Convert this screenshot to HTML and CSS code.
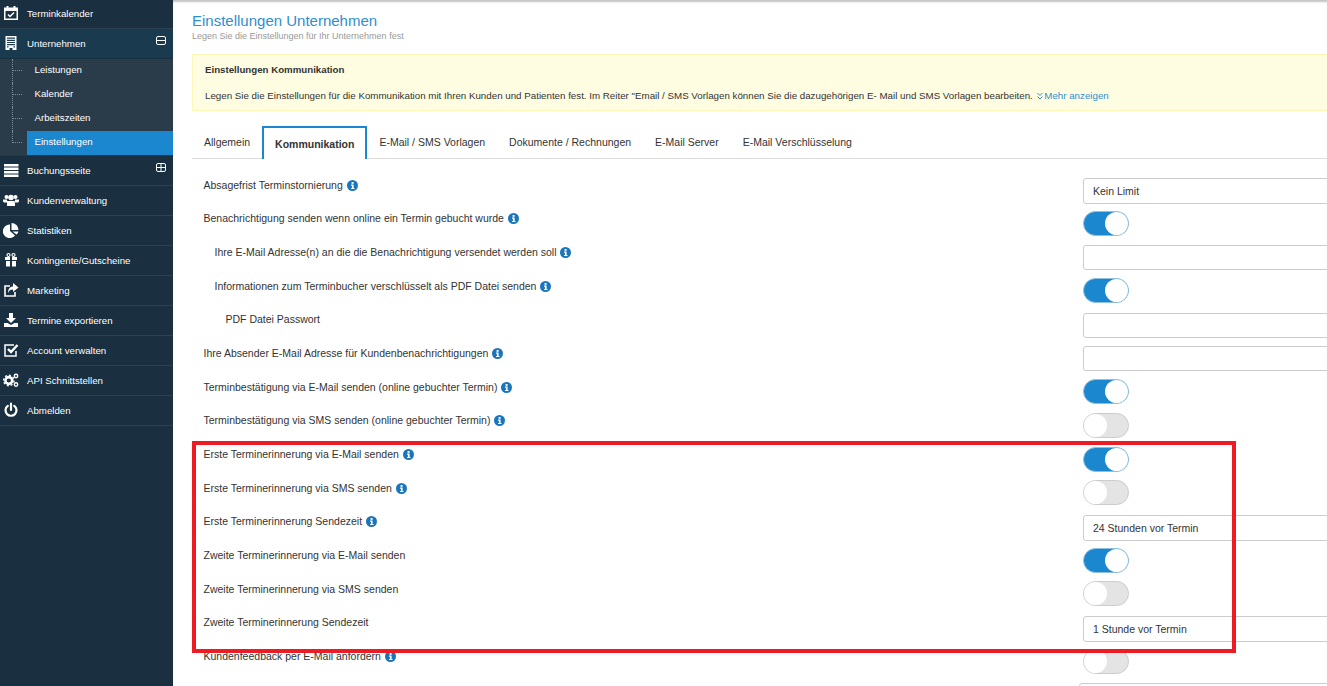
FILE: index.html
```html
<!DOCTYPE html>
<html lang="de">
<head>
<meta charset="utf-8">
<title>Einstellungen Unternehmen</title>
<link rel="stylesheet" href="styles.css">
</head>
<body>
<svg class="defs" width="0" height="0" aria-hidden="true">
  <symbol id="info" viewBox="0 0 12 12">
    <circle cx="6" cy="6" r="6" fill="#1b75bb"/>
    <rect x="5" y="2.2" width="2.2" height="2" fill="#fff"/>
    <path d="M4.4 5h2.8v3.600h1v1.200H4.400V8.600h1V6.200h-1z" fill="#fff"/>
  </symbol>
</svg>
<aside class="sidebar">
  <a class="nav-item">
    <svg class="nav-icon" viewBox="0 0 16 16"><path fill="#fff" d="M1 2.500h2.500V1h2v1.500h5V1h2v1.500H15V15H1zM2.500 6v7.500h11V6z"/><path d="M5 9.500l2 2 4-4" fill="none" stroke="#fff" stroke-width="1.500"/></svg>
    <span>Terminkalender</span>
  </a>
  <a class="nav-item nav-open">
    <svg class="nav-icon" viewBox="0 0 16 16"><path fill="#fff" fill-rule="evenodd" d="M2.500 1h11v14H9.500v-2h-3v2h-4zM4 2.500v1.200h8V2.500zM4 4.700v1.200h8V4.700zM4 6.900v1.200h8V6.900zM4 9.100v1.200h8V9.100zM4 11.300v1.200h1.500v-1.200zM10.500 11.300v1.200H12v-1.200z"/></svg>
    <span>Unternehmen</span>
    <svg class="nav-toggle" viewBox="0 0 10 10"><rect x=".5" y=".5" width="9" height="8" rx="1.500" fill="none" stroke="#fff"/><path d="M1 4.500h8" stroke="#fff"/></svg>
  </a>
  <ul class="subnav">
    <li class="sub-item"><span>Leistungen</span></li>
    <li class="sub-item"><span>Kalender</span></li>
    <li class="sub-item"><span>Arbeitszeiten</span></li>
    <li class="sub-item sub-active"><span>Einstellungen</span></li>
  </ul>
  <a class="nav-item">
    <svg class="nav-icon" viewBox="0 0 16 16"><path fill="#fff" d="M1 2h14.500v2.500H1zM1 5.500h14.500V8H1zM1 9h14.500v2.500H1zM1 12.500h14.500V15H1z"/></svg>
    <span>Buchungsseite</span>
    <svg class="nav-toggle" viewBox="0 0 10 10"><rect x=".5" y=".5" width="9" height="8" rx="1.500" fill="none" stroke="#fff"/><path d="M1 4.500h8M5 1v7" stroke="#fff"/></svg>
  </a>
  <a class="nav-item">
    <svg class="nav-icon" viewBox="0 0 16 16"><g fill="#fff"><circle cx="3.500" cy="5" r="2"/><circle cx="12.500" cy="5" r="2"/><circle cx="8" cy="5.500" r="2.800"/><path d="M0 7.500h4l.5 3H1l-1-1zM16 7.500h-4l-.5 3H15l1-1zM4 9h8v5H4z"/></g></svg>
    <span>Kundenverwaltung</span>
  </a>
  <a class="nav-item">
    <svg class="nav-icon" viewBox="0 0 16 16"><path fill="#fff" d="M7 2.500V9l5 4.500A6.800 6.800 0 1 1 7 2.500zM8.500 1A7 7 0 0 1 15.500 8H8.500zM9.500 9.500H15.500A7 7 0 0 1 13.500 12.500z"/></svg>
    <span>Statistiken</span>
  </a>
  <a class="nav-item">
    <svg class="nav-icon" viewBox="0 0 16 16"><path fill="#fff" d="M2 5h5v3H2zM9 5h5v3H9zM3 9h4v5.500H3zM9 9h4v5.500H9z"/><circle cx="5.500" cy="3" r="1.500" fill="none" stroke="#fff" stroke-width="1.200"/><circle cx="10.500" cy="3" r="1.500" fill="none" stroke="#fff" stroke-width="1.200"/></svg>
    <span>Kontingente/Gutscheine</span>
  </a>
  <a class="nav-item">
    <svg class="nav-icon" viewBox="0 0 16 16"><path fill="none" stroke="#fff" stroke-width="1.600" d="M7 4H2v10h10v-4"/><path fill="#fff" d="M10 1l5.500 4.500L10 10V7.500C7.500 7.500 6 8.500 5 11c0-4 2-6.500 5-6.500z"/></svg>
    <span>Marketing</span>
  </a>
  <a class="nav-item">
    <svg class="nav-icon" viewBox="0 0 16 16"><path fill="#fff" d="M6 1h4v5h3l-5 5-5-5h3zM1 11h3.500L8 13l3.500-2H15v4H1z"/></svg>
    <span>Termine exportieren</span>
  </a>
  <a class="nav-item">
    <svg class="nav-icon" viewBox="0 0 16 16"><path fill="none" stroke="#fff" stroke-width="1.500" d="M13 9v5H2V3h9"/><path fill="none" stroke="#fff" stroke-width="2.400" d="M5 7l3 3 6.500-7"/></svg>
    <span>Account verwalten</span>
  </a>
  <a class="nav-item">
    <svg class="nav-icon" viewBox="0 0 16 16"><circle cx="5.800" cy="8.500" r="3.400" fill="none" stroke="#fff" stroke-width="2.600"/><circle cx="5.800" cy="8.500" r="5.200" fill="none" stroke="#fff" stroke-width="1.400" stroke-dasharray="2 2"/><circle cx="13" cy="4" r="1.700" fill="none" stroke="#fff" stroke-width="1.400"/><circle cx="13" cy="12.500" r="1.700" fill="none" stroke="#fff" stroke-width="1.400"/></svg>
    <span>API Schnittstellen</span>
  </a>
  <a class="nav-item">
    <svg class="nav-icon" viewBox="0 0 16 16"><path fill="none" stroke="#fff" stroke-width="2.200" stroke-linecap="round" d="M4.800 3.800a5.500 5.500 0 1 0 6.400 0M8 1.500v6.500"/></svg>
    <span>Abmelden</span>
  </a>
</aside>
<main class="content">
  <header class="page-head">
    <h1 class="page-title">Einstellungen Unternehmen</h1>
    <p class="page-sub">Legen Sie die Einstellungen für Ihr Unternehmen fest</p>
  </header>
  <section class="notice">
    <h2 class="notice-title">Einstellungen Kommunikation</h2>
    <p class="notice-text">Legen Sie die Einstellungen für die Kommunikation mit Ihren Kunden und Patienten fest. Im Reiter "Email / SMS Vorlagen können Sie die dazugehörigen E- Mail und SMS Vorlagen bearbeiten. <a class="more"><svg class="more-icon" viewBox="0 0 8 8"><path d="M1.500 1l2.500 2.500L6.500 1M1.500 4.500L4 7l2.500-2.500" fill="none" stroke="#2f8ed0"/></svg> Mehr anzeigen</a></p>
  </section>
  <nav class="tabs">
    <a class="tab">Allgemein</a>
    <a class="tab tab-active">Kommunikation</a>
    <a class="tab">E-Mail / SMS Vorlagen</a>
    <a class="tab">Dokumente / Rechnungen</a>
    <a class="tab">E-Mail Server</a>
    <a class="tab">E-Mail Verschlüsselung</a>
  </nav>
  <form class="settings">
    <div class="row"><label class="label">Absagefrist Terminstornierung <svg class="info"><use href="#info"/></svg></label><div class="select">Kein Limit</div></div>
    <div class="row"><label class="label">Benachrichtigung senden wenn online ein Termin gebucht wurde <svg class="info"><use href="#info"/></svg></label><div class="switch on"></div></div>
    <div class="row"><label class="label indent1">Ihre E-Mail Adresse(n) an die die Benachrichtigung versendet werden soll <svg class="info"><use href="#info"/></svg></label><div class="input"></div></div>
    <div class="row"><label class="label indent1">Informationen zum Terminbucher verschlüsselt als PDF Datei senden <svg class="info"><use href="#info"/></svg></label><div class="switch on"></div></div>
    <div class="row"><label class="label indent2">PDF Datei Passwort</label><div class="input"></div></div>
    <div class="row"><label class="label">Ihre Absender E-Mail Adresse für Kundenbenachrichtigungen <svg class="info"><use href="#info"/></svg></label><div class="input"></div></div>
    <div class="row"><label class="label">Terminbestätigung via E-Mail senden (online gebuchter Termin) <svg class="info"><use href="#info"/></svg></label><div class="switch on"></div></div>
    <div class="row"><label class="label">Terminbestätigung via SMS senden (online gebuchter Termin) <svg class="info"><use href="#info"/></svg></label><div class="switch"></div></div>
    <div class="row"><label class="label">Erste Terminerinnerung via E-Mail senden <svg class="info"><use href="#info"/></svg></label><div class="switch on"></div></div>
    <div class="row"><label class="label">Erste Terminerinnerung via SMS senden <svg class="info"><use href="#info"/></svg></label><div class="switch"></div></div>
    <div class="row"><label class="label">Erste Terminerinnerung Sendezeit <svg class="info"><use href="#info"/></svg></label><div class="select">24 Stunden vor Termin</div></div>
    <div class="row"><label class="label">Zweite Terminerinnerung via E-Mail senden</label><div class="switch on"></div></div>
    <div class="row"><label class="label">Zweite Terminerinnerung via SMS senden</label><div class="switch"></div></div>
    <div class="row"><label class="label">Zweite Terminerinnerung Sendezeit</label><div class="select">1 Stunde vor Termin</div></div>
    <div class="row"><label class="label">Kundenfeedback per E-Mail anfordern <svg class="info"><use href="#info"/></svg></label><div class="switch"></div></div>
    <div class="row"><div class="label"></div><div class="input input-last"></div></div>
  </form>
  <div class="highlight"></div>
</main>
</body>
</html>
```
FILE: styles.css
```css
* { box-sizing: border-box; }
html, body { margin: 0; height: 100%; overflow: hidden; }
body {
  display: flex;
  width: 1327px;
  height: 686px;
  font-family: "Liberation Sans", Arial, sans-serif;
  font-size: 10.5px;
  color: #333;
  background: #fff;
}
.defs { position: absolute; }

/* sidebar */
.sidebar {
  flex: 0 0 173px;
  height: 686px;
  background: #1a2f3f;
  color: #fff;
  font-size: 9.7px;
}
.nav-item {
  display: flex;
  align-items: center;
  height: 30px;
  padding: 0 0 1px 3px;
  border-bottom: 1px solid #2c4152;
}
.nav-item:first-child { margin-top: -1px; }
.nav-item span { margin-left: 8px; }
.nav-icon { width: 16px; height: 16px; flex: none; }
.nav-open { background: #1a3a50; border-bottom-color: #16303f; }
.nav-toggle { width: 10px; height: 10px; margin-left: auto; margin-right: 7px; margin-bottom: 4px; flex: none; }
.subnav {
  list-style: none;
  margin: 0;
  padding: 0;
  background: #2a3c4a;
  height: 97px;
  border-bottom: 1px solid #1a3a50;
}
.sub-item {
  position: relative;
  height: 24px;
  display: flex;
  align-items: center;
  padding: 0 0 4px 34.5px;
}
.sub-item::before {
  content: "";
  position: absolute;
  left: 12px;
  top: 0;
  bottom: 0;
  border-left: 1px dotted #7f8c97;
}
.sub-item::after {
  content: "";
  position: absolute;
  left: 13px;
  top: 11px;
  width: 9px;
  border-top: 1px dotted #7f8c97;
}
.sub-active::before { bottom: 12px; }
.sub-active {
  background: linear-gradient(to right, #2a3c4a 27px, #1b87cf 27px);
}

/* content */
.content {
  position: relative;
  flex: 1;
  min-width: 0;
  height: 686px;
  overflow: hidden;
  padding-left: 19px;
  box-shadow: inset 0 3px 2px -1px #c4c4c4;
}
.page-head { padding-top: 12px; height: 54px; }
.page-title {
  margin: 0;
  font-size: 15px;
  font-weight: 400;
  line-height: 18px;
  color: #2f8ed0;
}
.page-sub {
  margin: 0;
  font-size: 9px;
  line-height: 12px;
  color: #999;
}
.notice {
  height: 57px;
  padding: 9px 12px 0;
  background: #fffde1;
  border: 1px solid #fdf6b6;
  border-right: 0;
  font-size: 9.75px;
}
.notice-title { margin: 0; font-size: 9.7px; line-height: 12px; font-weight: 700; }
.notice-text { margin: 14px 0 0; line-height: 12px; white-space: nowrap; }
.more { color: #2f8ed0; }
.more-icon { width: 8px; height: 8px; vertical-align: -0.5px; margin-right: -2px; }

.tabs {
  display: flex;
  height: 33px;
  margin-top: 15px;
  border-bottom: 1px solid #ddd;
}
.tab {
  height: 32px;
  padding: 9px 12px 0;
  line-height: 14px;
}
.tab-active {
  height: 33px;
  padding: 8.5px 11px 0;
  border: 2px solid #1b87cf;
  border-bottom: 0;
  background: #fff;
  font-weight: 700;
}

.settings { margin-top: 20px; }
.row {
  display: flex;
  height: 33.7px;
  padding-left: 11.5px;
}
.label {
  flex: 0 0 879.5px;
  line-height: 13px;
  margin-top: -.5px;
}
.indent1 { padding-left: 11px; }
.indent2 { padding-left: 22px; }
.info { width: 11px; height: 11px; vertical-align: -2px; margin-left: 1px; }
.select, .input {
  flex: 0 0 300px;
  height: 26px;
  margin-top: -1px;
  padding-left: 9px;
  line-height: 24px;
  border: 1px solid #ccc;
  border-radius: 3px;
}
.input { height: 25px; margin-top: -1px; }
.input-last { margin-left: -4px; flex-basis: 304px; }
.switch {
  position: relative;
  flex: none;
  width: 46px;
  height: 25px;
  margin-top: -2px;
  border: 1px solid #ccc;
  border-radius: 13px;
  background: #e4e4e4;
}
.switch::after {
  content: "";
  position: absolute;
  left: 0;
  top: 0;
  width: 23px;
  height: 23px;
  border-radius: 50%;
  background: #fff;
}
.switch.on { background: #1b87cf; border-color: #8fbfe0; }
.switch.on::after { left: 21px; }

.highlight {
  position: absolute;
  left: 19px;
  top: 441px;
  width: 1044px;
  height: 212px;
  border: 4px solid #ed1c24;
  pointer-events: none;
}
```
